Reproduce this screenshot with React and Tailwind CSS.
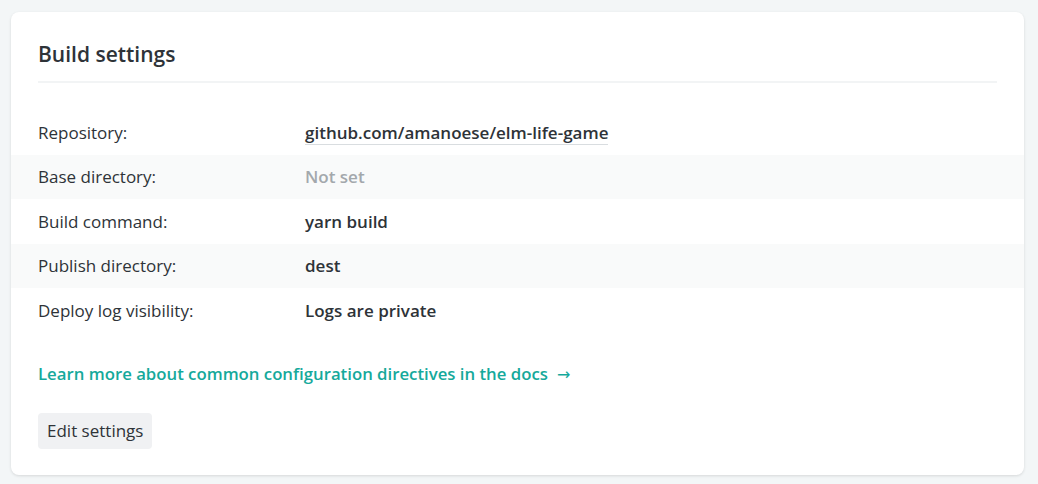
import React from 'react';

const rows = [
    { label: 'Repository:', value: 'github.com/amanoese/elm-life-game', kind: 'link' },
    { label: 'Base directory:', value: 'Not set', kind: 'muted' },
    { label: 'Build command:', value: 'yarn build' },
    { label: 'Publish directory:', value: 'dest' },
    { label: 'Deploy log visibility:', value: 'Logs are private' },
];

const SettingRow = ({ label, value, kind, striped }) => (
    <div className={`flex items-center h-[44.5px] px-[27px] ${striped ? 'bg-[#f9fafa]' : ''}`}>
        <div className="w-[267px] shrink-0 text-[#2e3338]">{label}</div>
        <div className="min-w-0">
            {kind === 'link' ? (
                <span className="font-semibold text-[#2e3338] border-b border-[#d9dde0]">{value}</span>
            ) : kind === 'muted' ? (
                <span className="font-semibold text-[#a3a8ac]">{value}</span>
            ) : (
                <span className="font-semibold text-[#2e3338]">{value}</span>
            )}
        </div>
    </div>
);

export default function App() {
    return (
        <div className="min-h-[484px] bg-[#f3f6f7] pt-3 pl-[11px] pr-[14px] pb-[10px] font-['Open_Sans',sans-serif] text-[17px]">
            <div className="bg-white rounded-lg shadow-[0_1px_3px_rgba(0,0,0,0.12)] pb-[26px]">
                <div className="px-[27px] pt-[27px]">
                    <h2 className="text-[21px] leading-[30px] font-semibold text-[#2e3338]">Build settings</h2>
                    <div className="mt-[12px] h-[2px] bg-[#f2f4f5]"></div>
                </div>

                <div className="mt-[27px]">
                    {rows.map((r, i) => (
                        <SettingRow key={r.label} {...r} striped={i % 2 === 1} />
                    ))}
                </div>

                <div className="px-[27px] mt-[28px]">
                    <a href="#" className="font-semibold text-[16.75px] text-[#15a99b]">
                        Learn more about common configuration directives in the docs
                        <span className="ml-[9px] font-['DejaVu_Sans',sans-serif] font-normal text-[16px]">→</span>
                    </a>
                </div>

                <div className="px-[27px] mt-[26px]">
                    <button className="h-9 px-[9px] rounded bg-[#f0f1f3] text-[#2e3338]">Edit settings</button>
                </div>
            </div>
        </div>
    );
}
